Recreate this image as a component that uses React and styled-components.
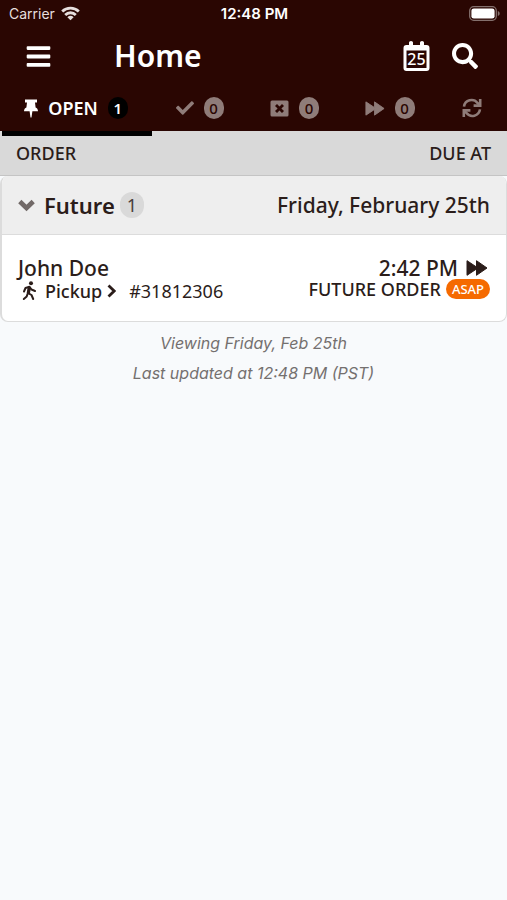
import React from "react"
import styled, { createGlobalStyle } from "styled-components"
import { FaBars, FaCheck, FaSearch } from "react-icons/fa"

const App = () => (
  <>
    <GlobalStyle />
    <TopBar>
      <StatusBar>
        <Carrier>
          Carrier <WifiIcon />
        </Carrier>
        <Clock>12:48 PM</Clock>
        <Battery />
      </StatusBar>
      <TitleRow>
        <IconButton aria-label="Menu">
          <FaBars size={27} />
        </IconButton>
        <Title>Home</Title>
        <IconButton aria-label="Choose date">
          <CalendarIcon day="25" />
        </IconButton>
        <IconButton aria-label="Search">
          <FaSearch size={26} />
        </IconButton>
      </TitleRow>
      <Tabs>
        <Tab $active>
          <PinIcon />
          <TabLabel>OPEN</TabLabel>
          <TabCount $active>1</TabCount>
        </Tab>
        <Tab aria-label="Completed">
          <FaCheck size={18} />
          <TabCount>0</TabCount>
        </Tab>
        <Tab aria-label="Cancelled">
          <CancelIcon />
          <TabCount>0</TabCount>
        </Tab>
        <Tab aria-label="Future">
          <ForwardIcon width={20} height={15} />
          <TabCount>0</TabCount>
        </Tab>
        <Tab aria-label="Refresh">
          <RefreshIcon />
        </Tab>
      </Tabs>
    </TopBar>
    <main>
      <ColumnHeader>
        <span>ORDER</span>
        <span>DUE AT</span>
      </ColumnHeader>
      <Group>
        <GroupHeader>
          <GroupToggle>
            <ChevronDownIcon />
            <GroupName>Future</GroupName>
            <GroupCount>1</GroupCount>
          </GroupToggle>
          <GroupDate>Friday, February 25th</GroupDate>
        </GroupHeader>
        <Order href="#31812306">
          <div>
            <Customer>John Doe</Customer>
            <OrderLine>
              <WalkIcon />
              <OrderType>Pickup</OrderType>
              <ChevronRightIcon />
              <OrderNumber>#31812306</OrderNumber>
            </OrderLine>
          </div>
          <Due>
            <DueTime>
              2:42 PM <ForwardIcon width={22} height={16} />
            </DueTime>
            <DueNote>
              FUTURE ORDER <Asap>ASAP</Asap>
            </DueNote>
          </Due>
        </Order>
      </Group>
      <Footnote>
        <p>Viewing Friday, Feb 25th</p>
        <p>Last updated at 12:48 PM (PST)</p>
      </Footnote>
    </main>
  </>
)

const WifiIcon = () => (
  <svg width="19" height="15" viewBox="0 0 19 15" fill="none" stroke="currentColor" strokeWidth="2.8">
    <path d="M1.2 5.4a12 12 0 0 1 16.6 0M4.2 8.9a7.6 7.6 0 0 1 10.6 0" />
    <path d="M9.5 14.2 6.4 11.2a4.5 4.5 0 0 1 6.2 0z" fill="currentColor" stroke="none" />
  </svg>
)

const Battery = () => (
  <BatterySvg width="31" height="15" viewBox="0 0 31 15">
    <rect x=".7" y=".7" width="26.6" height="13.6" rx="4" fill="none" stroke="#84706d" strokeWidth="1.3" />
    <rect x="2.4" y="2.4" width="23.2" height="10.2" rx="2.4" fill="#fff" />
    <path d="M28.8 5v5c1.4-.5 1.9-1.4 1.9-2.5S30.2 5.5 28.8 5z" fill="#84706d" />
  </BatterySvg>
)

const CalendarIcon = ({ day }) => (
  <svg width="27" height="30" viewBox="0 0 27 30">
    <path
      fill="currentColor"
      fillRule="evenodd"
      d="M6 1.5Q6 0 8 0t2 1.5V4h7V1.5Q17 0 19 0t2 1.5V4h2.5Q26.500 4 26.500 7v20q0 3-3 3h-20q-3 0-3-3V7q0-3 3-3H6zM3.500 9.500V27h20V9.500z"
    />
    <CalendarDay x="13.5" y="24" textAnchor="middle">
      {day}
    </CalendarDay>
  </svg>
)

const PinIcon = () => (
  <svg width="14" height="19" viewBox="0 0 14 19" fill="currentColor">
    <path d="M1 .5h12v3h-2l.6 5c1.4.6 2.4 1.800 2.400 3.700H8.400L7.500 18.500h-1l-.9-6.300H0c0-1.900 1-3.100 2.400-3.700L3 3.500H1z" />
  </svg>
)

const CancelIcon = () => (
  <svg width="19" height="17" viewBox="0 0 19 17">
    <path
      fill="currentColor"
      fillRule="evenodd"
      d="M2 .5h15q1.5 0 1.5 1.5v13q0 1.5-1.5 1.5H2Q.5 16.5.5 15V2Q.5.5 2 .5zM7 4 5 6l2.600 2.500L5 11l2 2 2.500-2.500L12 13l2-2-2.600-2.500L14 6l-2-2-2.500 2.500z"
    />
  </svg>
)

const ForwardIcon = ({ width, height }) => (
  <svg
    width={width}
    height={height}
    viewBox="0 0 22 16"
    fill="currentColor"
    stroke="currentColor"
    strokeLinejoin="round"
  >
    <path d="M1 .7 10.500 7V.7L21 8 10.500 15.300V9L1 15.300z" />
  </svg>
)

const RefreshIcon = () => (
  <svg width="20" height="20" viewBox="0 0 20 20" fill="none" stroke="currentColor" strokeWidth="2.6">
    <path d="M2 8.6A7.6 7.6 0 0 1 15.5 5L18 7M18 11.4A7.6 7.6 0 0 1 4.5 15L2 13" />
    <path d="M18.2 1v6.6h-6.6M1.8 19v-6.6h6.600" />
  </svg>
)

const ChevronDownIcon = () => (
  <svg width="17" height="13" viewBox="0 0 17 13" fill="none" stroke="currentColor" strokeWidth="4.6">
    <path d="M1.8 2.5 8.5 9l6.7-6.5" />
  </svg>
)

const ChevronRightIcon = () => (
  <svg width="10" height="14" viewBox="0 0 10 14" fill="none" stroke="currentColor" strokeWidth="2.8">
    <path d="M1.5 1.5 7.2 7l-5.7 5.5" />
  </svg>
)

const WalkIcon = () => (
  <svg
    width="22"
    height="20"
    viewBox="0 0 22 20"
    fill="none"
    stroke="currentColor"
    strokeWidth="2"
    strokeLinecap="round"
    strokeLinejoin="round"
  >
    <circle cx="13" cy="2.3" r="2" fill="currentColor" stroke="none" />
    <path d="M6 10.500 7.500 7 11.500 5.800 13.500 8.500 17 10M10.800 7 9.700 11.800 13.500 14l1.700 4M9.500 13 8.700 15.500 5.800 18" />
    <path d="M11.4 7 10.6 11.5" strokeWidth="3" />
  </svg>
)

const GlobalStyle = createGlobalStyle`
  * {
    box-sizing: border-box;
  }

  body {
    margin: 0;

    background: #f8fafc;
    color: #2b1d1a;
    font-family: "Noto Sans", "Open Sans", sans-serif;
  }

  button {
    padding: 0;

    border: 0;
    background: none;
    color: inherit;
    font: inherit;
  }

  svg {
    flex: none;
  }
`

const TopBar = styled.header`
  background: #2a0602;
  color: #fff;
`

const StatusBar = styled.div`
  display: grid;
  grid-template-columns: 1fr auto 1fr;
  align-items: center;

  height: 27px;
  padding: 0 7px 0 9px;

  font-family: Inter, sans-serif;
  font-size: 14px;
`

const Carrier = styled.div`
  display: flex;
  align-items: center;
  gap: 6px;

  color: #e6dfde;
`

const Clock = styled.div`
  font-size: 15px;
  font-weight: 600;
`

const BatterySvg = styled.svg`
  justify-self: end;
`

const TitleRow = styled.div`
  display: flex;
  align-items: center;

  height: 58px;
  padding: 0 22px 0 18px;
`

const IconButton = styled.button`
  display: flex;
  align-items: center;
  justify-content: center;

  width: 40px;
  height: 48px;
  margin-left: 9px;

  &:first-child {
    margin-left: 0;
  }
`

const Title = styled.h1`
  flex: 1;

  margin: 0 0 0 56px;

  font-size: 30px;
  font-weight: 600;
  line-height: 40px;
`

const CalendarDay = styled.text`
  fill: currentColor;

  font-size: 16px;
  font-weight: 500;
`

const Tabs = styled.nav`
  display: grid;
  grid-template-columns: 152fr 95fr 95fr 95fr 70fr;

  height: 46px;
`

const Tab = styled.button`
  position: relative;

  display: flex;
  align-items: center;
  justify-content: center;
  gap: 10px;

  color: ${({ $active }) => ($active ? "#fff" : "#8f7c79")};

  &::after {
    content: "";
    display: ${({ $active }) => ($active ? "block" : "none")};

    position: absolute;
    right: 0;
    bottom: -5px;
    left: 2px;

    height: 5px;

    background: #000;
  }
`

const TabLabel = styled.span`
  font-size: 18px;
  font-weight: 600;
`

const TabCount = styled.span`
  min-width: 20px;
  border-radius: 11px;

  background: ${({ $active }) => ($active ? "#000" : "#8f7c79")};
  color: ${({ $active }) => ($active ? "#fff" : "#2a0602")};
  font-size: 15px;
  font-weight: ${({ $active }) => ($active ? 600 : 500)};
  line-height: 22px;
  text-align: center;
`

const ColumnHeader = styled.div`
  display: flex;
  align-items: center;
  justify-content: space-between;

  height: 45px;
  padding: 0 16px;
  border-bottom: 1px solid #c4c4c4;

  background: #d9d9d9;
  font-size: 18px;
  font-weight: 500;
`

const Group = styled.section`
  overflow: hidden;

  border: 1px solid #dcdcdc;
  border-width: 0 1px 1px 2px;
  border-radius: 8px;

  background: #fff;
`

const GroupHeader = styled.div`
  display: flex;
  align-items: center;
  justify-content: space-between;

  height: 59px;
  padding: 0 16px;
  border-bottom: 1px solid #dcdcdc;

  background: #eee;
`

const GroupToggle = styled.button`
  display: flex;
  align-items: center;

  color: #716967;
`

const GroupName = styled.span`
  margin: 0 5px 0 9px;

  color: #2b1d1a;
  font-size: 22px;
  font-weight: 600;
  line-height: 26px;
`

const GroupCount = styled.span`
  width: 24px;
  border-radius: 13px;

  background: #d9d9d9;
  color: #4a3e3b;
  font-size: 18px;
  line-height: 26px;
  text-align: center;
`

const GroupDate = styled.span`
  font-size: 21px;
  font-weight: 500;
`

const Order = styled.a`
  display: flex;
  justify-content: space-between;

  padding: 22px 16px 18px;

  color: inherit;
  text-decoration: none;
`

const Customer = styled.div`
  font-size: 21px;
  font-weight: 500;
  line-height: 23px;
`

const OrderLine = styled.div`
  display: flex;
  align-items: center;

  font-size: 18px;
  line-height: 22px;
`

const OrderType = styled.span`
  margin: 0 5px;

  font-weight: 500;
`

const OrderNumber = styled.span`
  margin-left: 12px;
`

const Due = styled.div`
  display: flex;
  flex-direction: column;
  align-items: flex-end;

  padding-bottom: 4px;
`

const DueTime = styled.div`
  display: flex;
  align-items: center;
  gap: 8px;

  padding-right: 2px;

  font-size: 21px;
  font-weight: 500;
  line-height: 22px;
`

const DueNote = styled.div`
  display: flex;
  align-items: center;
  gap: 5px;

  font-size: 18px;
  font-weight: 500;
  line-height: 20px;
`

const Asap = styled.span`
  padding: 0 6px;
  border-radius: 10px;

  background: #f56a00;
  color: #fff;
  font-size: 13px;
`

const Footnote = styled.footer`
  padding-top: 6px;

  color: #74706f;
  font-family: Inter, sans-serif;
  font-size: 16px;
  font-style: italic;
  line-height: 30px;
  text-align: center;

  p {
    margin: 0;
  }
`

export default App
